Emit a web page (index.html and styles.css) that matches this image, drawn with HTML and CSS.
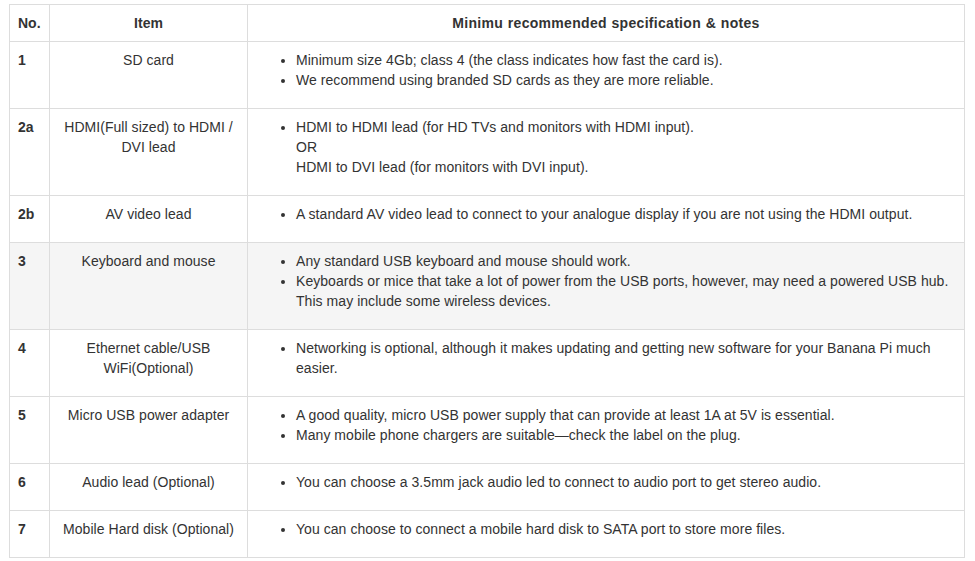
FILE: index.html
```html
<!DOCTYPE html>
<html>
<head>
<meta charset="utf-8">
<link rel="stylesheet" href="styles.css">
</head>
<body>
<div class="wrap">
<table class="spec">
  <colgroup>
    <col class="c-no">
    <col class="c-item">
    <col class="c-notes">
  </colgroup>
  <thead>
    <tr>
      <th class="no">No.</th>
      <th class="item">Item</th>
      <th class="notes">Minimu recommended specification &amp; notes</th>
    </tr>
  </thead>
  <tbody>
    <tr>
      <td class="no">1</td>
      <td class="item">SD card</td>
      <td><ul><li>Minimum size 4Gb; class 4 (the class indicates how fast the card is).</li><li>We recommend using branded SD cards as they are more reliable.</li></ul></td>
    </tr>
    <tr>
      <td class="no">2a</td>
      <td class="item">HDMI(Full sized) to HDMI / DVI lead</td>
      <td><ul><li>HDMI to HDMI lead (for HD TVs and monitors with HDMI input).<br>OR<br>HDMI to DVI lead (for monitors with DVI input).</li></ul></td>
    </tr>
    <tr>
      <td class="no">2b</td>
      <td class="item">AV video lead</td>
      <td><ul><li>A standard AV video lead to connect to your analogue display if you are not using the HDMI output.</li></ul></td>
    </tr>
    <tr class="hl">
      <td class="no">3</td>
      <td class="item">Keyboard and mouse</td>
      <td><ul><li>Any standard USB keyboard and mouse should work.</li><li>Keyboards or mice that take a lot of power from the USB ports, however, may need a powered USB hub. This may include some wireless devices.</li></ul></td>
    </tr>
    <tr>
      <td class="no">4</td>
      <td class="item">Ethernet cable/USB WiFi(Optional)</td>
      <td><ul><li>Networking is optional, although it makes updating and getting new software for your Banana Pi much easier.</li></ul></td>
    </tr>
    <tr>
      <td class="no">5</td>
      <td class="item">Micro USB power adapter</td>
      <td><ul><li>A good quality, micro USB power supply that can provide at least 1A at 5V is essential.</li><li>Many mobile phone chargers are suitable—check the label on the plug.</li></ul></td>
    </tr>
    <tr>
      <td class="no">6</td>
      <td class="item">Audio lead (Optional)</td>
      <td><ul><li>You can choose a 3.5mm jack audio led to connect to audio port to get stereo audio.</li></ul></td>
    </tr>
    <tr>
      <td class="no">7</td>
      <td class="item">Mobile Hard disk (Optional)</td>
      <td><ul><li>You can choose to connect a mobile hard disk to SATA port to store more files.</li></ul></td>
    </tr>
  </tbody>
</table>
</div>
</body>
</html>
```
FILE: styles.css
```css
html, body {
  margin: 0;
  padding: 0;
  background: #fff;
}
body {
  font-family: "Liberation Sans", Arial, sans-serif;
  font-size: 14px;
  line-height: 20px;
  color: #333;
}
.wrap {
  padding: 4px 0 0 9px;
}
.spec {
  border-collapse: collapse;
  border-spacing: 0;
  width: 956px;
  table-layout: fixed;
}
.c-no { width: 40px; }
.c-item { width: 198px; }
.spec th, .spec td {
  border: 1px solid #ddd;
  padding: 8px;
  vertical-align: top;
  line-height: 20px;
}
.spec th {
  font-weight: bold;
  text-align: center;
}
.spec th.notes {
  letter-spacing: 0.3px;
  word-spacing: 0.5px;
}
.spec td {
  letter-spacing: 0.05px;
}
.spec th.no, .spec td.no {
  text-align: left;
  font-weight: bold;
}
.spec td.item {
  text-align: center;
}
.spec ul {
  margin: 0 0 10px 0;
  padding-left: 40px;
}
.spec tr.hl td {
  background: #f5f5f5;
}
```
